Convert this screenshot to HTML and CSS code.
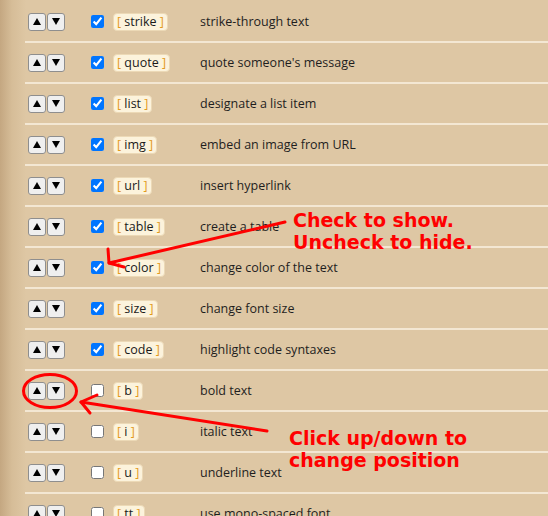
FILE: index.html
```html
<!DOCTYPE html>
<html lang="en">
<head>
  <meta charset="UTF-8" />
  <meta name="viewport" content="width=device-width, initial-scale=1.0"/>
  <title>BBCode Buttons | Settings</title>
  <link rel="stylesheet" href="styles.css">
</head>
<body>
  <div class="page">
    <div class="tag-list">
      <div class="tag-row">
        <div class="move"><button class="btn-move"><svg width="8" height="7"><polygon points="4,0 8,7 0,7"/></svg></button><button class="btn-move"><svg width="8" height="7"><polygon points="0,0 8,0 4,7"/></svg></button></div>
        <div class="show"><input type="checkbox" checked /></div>
        <div class="code"><span class="tag"><b>[</b> strike <b>]</b></span></div>
        <div class="desc">strike-through text</div>
      </div>
      <div class="tag-row">
        <div class="move"><button class="btn-move"><svg width="8" height="7"><polygon points="4,0 8,7 0,7"/></svg></button><button class="btn-move"><svg width="8" height="7"><polygon points="0,0 8,0 4,7"/></svg></button></div>
        <div class="show"><input type="checkbox" checked /></div>
        <div class="code"><span class="tag"><b>[</b> quote <b>]</b></span></div>
        <div class="desc">quote someone's message</div>
      </div>
      <div class="tag-row">
        <div class="move"><button class="btn-move"><svg width="8" height="7"><polygon points="4,0 8,7 0,7"/></svg></button><button class="btn-move"><svg width="8" height="7"><polygon points="0,0 8,0 4,7"/></svg></button></div>
        <div class="show"><input type="checkbox" checked /></div>
        <div class="code"><span class="tag"><b>[</b> list <b>]</b></span></div>
        <div class="desc">designate a list item</div>
      </div>
      <div class="tag-row">
        <div class="move"><button class="btn-move"><svg width="8" height="7"><polygon points="4,0 8,7 0,7"/></svg></button><button class="btn-move"><svg width="8" height="7"><polygon points="0,0 8,0 4,7"/></svg></button></div>
        <div class="show"><input type="checkbox" checked /></div>
        <div class="code"><span class="tag"><b>[</b> img <b>]</b></span></div>
        <div class="desc">embed an image from URL</div>
      </div>
      <div class="tag-row">
        <div class="move"><button class="btn-move"><svg width="8" height="7"><polygon points="4,0 8,7 0,7"/></svg></button><button class="btn-move"><svg width="8" height="7"><polygon points="0,0 8,0 4,7"/></svg></button></div>
        <div class="show"><input type="checkbox" checked /></div>
        <div class="code"><span class="tag"><b>[</b> url <b>]</b></span></div>
        <div class="desc">insert hyperlink</div>
      </div>
      <div class="tag-row">
        <div class="move"><button class="btn-move"><svg width="8" height="7"><polygon points="4,0 8,7 0,7"/></svg></button><button class="btn-move"><svg width="8" height="7"><polygon points="0,0 8,0 4,7"/></svg></button></div>
        <div class="show"><input type="checkbox" checked /></div>
        <div class="code"><span class="tag"><b>[</b> table <b>]</b></span></div>
        <div class="desc">create a table</div>
      </div>
      <div class="tag-row">
        <div class="move"><button class="btn-move"><svg width="8" height="7"><polygon points="4,0 8,7 0,7"/></svg></button><button class="btn-move"><svg width="8" height="7"><polygon points="0,0 8,0 4,7"/></svg></button></div>
        <div class="show"><input type="checkbox" checked /></div>
        <div class="code"><span class="tag"><b>[</b> color <b>]</b></span></div>
        <div class="desc">change color of the text</div>
      </div>
      <div class="tag-row">
        <div class="move"><button class="btn-move"><svg width="8" height="7"><polygon points="4,0 8,7 0,7"/></svg></button><button class="btn-move"><svg width="8" height="7"><polygon points="0,0 8,0 4,7"/></svg></button></div>
        <div class="show"><input type="checkbox" checked /></div>
        <div class="code"><span class="tag"><b>[</b> size <b>]</b></span></div>
        <div class="desc">change font size</div>
      </div>
      <div class="tag-row">
        <div class="move"><button class="btn-move"><svg width="8" height="7"><polygon points="4,0 8,7 0,7"/></svg></button><button class="btn-move"><svg width="8" height="7"><polygon points="0,0 8,0 4,7"/></svg></button></div>
        <div class="show"><input type="checkbox" checked /></div>
        <div class="code"><span class="tag"><b>[</b> code <b>]</b></span></div>
        <div class="desc">highlight code syntaxes</div>
      </div>
      <div class="tag-row">
        <div class="move"><button class="btn-move"><svg width="8" height="7"><polygon points="4,0 8,7 0,7"/></svg></button><button class="btn-move"><svg width="8" height="7"><polygon points="0,0 8,0 4,7"/></svg></button></div>
        <div class="show"><input type="checkbox" /></div>
        <div class="code"><span class="tag"><b>[</b> b <b>]</b></span></div>
        <div class="desc">bold text</div>
      </div>
      <div class="tag-row">
        <div class="move"><button class="btn-move"><svg width="8" height="7"><polygon points="4,0 8,7 0,7"/></svg></button><button class="btn-move"><svg width="8" height="7"><polygon points="0,0 8,0 4,7"/></svg></button></div>
        <div class="show"><input type="checkbox" /></div>
        <div class="code"><span class="tag"><b>[</b> i <b>]</b></span></div>
        <div class="desc">italic text</div>
      </div>
      <div class="tag-row">
        <div class="move"><button class="btn-move"><svg width="8" height="7"><polygon points="4,0 8,7 0,7"/></svg></button><button class="btn-move"><svg width="8" height="7"><polygon points="0,0 8,0 4,7"/></svg></button></div>
        <div class="show"><input type="checkbox" /></div>
        <div class="code"><span class="tag"><b>[</b> u <b>]</b></span></div>
        <div class="desc">underline text</div>
      </div>
      <div class="tag-row">
        <div class="move"><button class="btn-move"><svg width="8" height="7"><polygon points="4,0 8,7 0,7"/></svg></button><button class="btn-move"><svg width="8" height="7"><polygon points="0,0 8,0 4,7"/></svg></button></div>
        <div class="show"><input type="checkbox" /></div>
        <div class="code"><span class="tag"><b>[</b> tt <b>]</b></span></div>
        <div class="desc">use mono-spaced font</div>
      </div>
    </div>

    <!-- help annotations drawn over the list -->
    <svg class="marks" width="548" height="516">
      <line x1="285" y1="222" x2="109" y2="263"/>
      <polyline points="108,249 109,263 124,267"/>
      <ellipse cx="50" cy="391" rx="26.5" ry="16.5"/>
      <line x1="267" y1="431" x2="81" y2="402"/>
      <polyline points="97,395 81,402 90,413"/>
    </svg>
    <div class="note note-show">Check to show.<br>Uncheck to hide.</div>
    <div class="note note-move">Click up/down to<br>change position</div>
  </div>
</body>
</html>
```

FILE: styles.css
```css
body {
  margin: 0;
  font-family: 'Open Sans', sans-serif;
  color: #1e1e1e;
  background: linear-gradient(to right, #c4a781 0, #d6bd98 12px, #dec7a4 26px) #dec7a4;
  overflow: hidden;
}

.page {
  position: relative;
  width: 548px;
  height: 516px;
  overflow: hidden;
}

.tag-list {
  margin-left: 25px;
  padding-top: 2px;
}

.tag-row {
  display: grid;
  grid-template-columns: 63px 25px 87px 1fr;
  align-items: center;
  height: 39px;
  border-bottom: 2px solid #f3e7d3;
}

.move {
  display: flex;
  gap: 1px;
  padding-left: 3px;
}

.btn-move {
  width: 18px;
  height: 18px;
  padding: 0;
  border: 1px solid #8e8e8e;
  border-radius: 3px;
  background: #efefef;
  display: flex;
  align-items: center;
  justify-content: center;
}

.btn-move svg {
  display: block;
  fill: #000;
}

.show {
  padding-left: 3px;
  display: flex;
}

.show input {
  margin: 0;
  width: 13px;
  height: 13px;
}

.code {
  display: flex;
}

.tag {
  font-size: 12.5px;
  line-height: 16px;
  padding: 0 3px;
  background: #fcf3dc;
  border: 1px solid #ecd9b6;
  border-radius: 4px;
  color: #1a1a1a;
}

.tag b {
  font-weight: 400;
  color: #e39a1c;
}

.desc {
  font-size: 12.5px;
  line-height: 17px;
}

.marks {
  position: absolute;
  top: 0;
  left: 0;
  pointer-events: none;
  fill: none;
  stroke: #ff0000;
  stroke-width: 3;
  stroke-linecap: round;
  stroke-linejoin: round;
}

.note {
  position: absolute;
  font-family: 'DejaVu Sans', sans-serif;
  font-weight: bold;
  font-size: 19px;
  line-height: 22px;
  color: #ff0000;
  white-space: nowrap;
}

.note-show {
  left: 293px;
  top: 209px;
}

.note-move {
  left: 289px;
  top: 427px;
}
```
